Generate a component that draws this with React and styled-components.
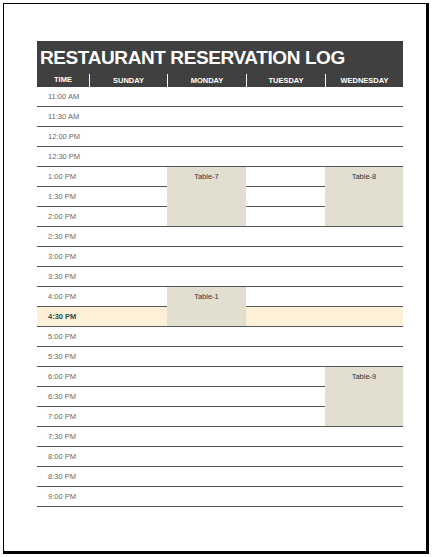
import styled, { createGlobalStyle } from "styled-components";

const GlobalStyle = createGlobalStyle`
  html, body {
    margin: 0;
    padding: 0;
    background: #ffffff;
  }
  body {
    font-family: "Liberation Sans", Arial, sans-serif;
  }
`;

const DAYS = ["SUNDAY", "MONDAY", "TUESDAY", "WEDNESDAY"];

const TIMES = [
  "11:00 AM", "11:30 AM", "12:00 PM", "12:30 PM", "1:00 PM", "1:30 PM",
  "2:00 PM", "2:30 PM", "3:00 PM", "3:30 PM", "4:00 PM", "4:30 PM",
  "5:00 PM", "5:30 PM", "6:00 PM", "6:30 PM", "7:00 PM", "7:30 PM",
  "8:00 PM", "8:30 PM", "9:00 PM",
];

const CURRENT = 11;

// day: 0 = sunday
const BOOKINGS = [
  { day: 1, row: 4, span: 3, label: "Table-7" },
  { day: 3, row: 4, span: 3, label: "Table-8" },
  { day: 1, row: 10, span: 2, label: "Table-1" },
  { day: 3, row: 14, span: 3, label: "Table-9" },
];

const Page = styled.div`
  width: 432px;
  height: 557px;
  padding: 3px;
  box-sizing: border-box;
`;

const Sheet = styled.div`
  width: 426px;
  height: 551px;
  box-sizing: border-box;
  border-style: solid;
  border-color: #000;
  border-width: 1px 3px 3px 1px;
  padding: 37px 0 0 33px;
`;

const Log = styled.div`
  width: 366px;
`;

const Title = styled.h1`
  margin: 0;
  height: 32px;
  background: #404040;
  color: #ffffff;
  font-size: 19px;
  font-weight: bold;
  letter-spacing: -0.4px;
  line-height: 33px;
  padding-left: 3px;
  white-space: nowrap;
`;

const Grid = styled.div`
  display: grid;
  grid-template-columns: 52px 78px 79px 79px 78px;
  grid-template-rows: 14px;
  grid-auto-rows: 20px;
`;

const HeadWrap = styled.div`
  grid-row: 1;
  background: #404040;
`;

const HeadCell = styled.div`
  height: 100%;
  box-sizing: border-box;
  color: #ffffff;
  font-size: 7.5px;
  font-weight: bold;
  text-align: center;
  border-left: ${(p) => (p.$first ? "none" : "1px solid #ffffff")};
  line-height: 14px;
`;

const HeadInner = styled.div`
  height: 100%;
  padding-top: 1px;
  box-sizing: border-box;
`;

const TimeCell = styled.div`
  grid-column: 1;
  grid-row: ${(p) => p.$row};
  box-sizing: border-box;
  border-bottom: 1px solid #555;
  background: ${(p) => (p.$current ? "#fdf0d7" : "transparent")};
  color: ${(p) => (p.$current ? "#1f4f4f" : "#666666")};
  font-size: 7.5px;
  font-weight: ${(p) => (p.$current ? "bold" : "normal")};
  line-height: 19px;
  padding-left: 11px;
  white-space: nowrap;
`;

const Slot = styled.div`
  grid-column: ${(p) => p.$col};
  grid-row: ${(p) => p.$row};
  box-sizing: border-box;
  border-bottom: 1px solid #555;
  background: ${(p) => (p.$current ? "#fdf0d7" : "transparent")};
`;

const Booking = styled.div`
  grid-column: ${(p) => p.$col};
  grid-row: ${(p) => p.$row} / span ${(p) => p.$span};
  box-sizing: border-box;
  border-bottom: 1px solid #555;
  background: #e2dfd0;
  color: #333333;
  font-size: 7.5px;
  line-height: 19px;
  text-align: center;
`;

function findBooking(day, row) {
  return BOOKINGS.find((b) => b.day === day && row >= b.row && row < b.row + b.span);
}

export default function App() {
  const cells = [];
  TIMES.forEach((time, i) => {
    const gridRow = i + 2;
    cells.push(
      <TimeCell key={`t${i}`} $row={gridRow} $current={i === CURRENT}>
        {time}
      </TimeCell>
    );
    DAYS.forEach((_, d) => {
      const b = findBooking(d, i);
      if (b) {
        if (b.row === i) {
          cells.push(
            <Booking key={`b${d}-${i}`} $col={d + 2} $row={gridRow} $span={b.span}>
              {b.label}
            </Booking>
          );
        }
        return;
      }
      cells.push(<Slot key={`s${d}-${i}`} $col={d + 2} $row={gridRow} $current={i === CURRENT} />);
    });
  });

  return (
    <Page>
      <GlobalStyle />
      <Sheet>
        <Log>
          <Title>RESTAURANT RESERVATION LOG</Title>
          <Grid>
            <HeadWrap>
              <HeadCell $first>TIME</HeadCell>
            </HeadWrap>
            {DAYS.map((d) => (
              <HeadWrap key={d}>
                <HeadInner>
                  <HeadCell>{d}</HeadCell>
                </HeadInner>
              </HeadWrap>
            ))}
            {cells}
          </Grid>
        </Log>
      </Sheet>
    </Page>
  );
}
